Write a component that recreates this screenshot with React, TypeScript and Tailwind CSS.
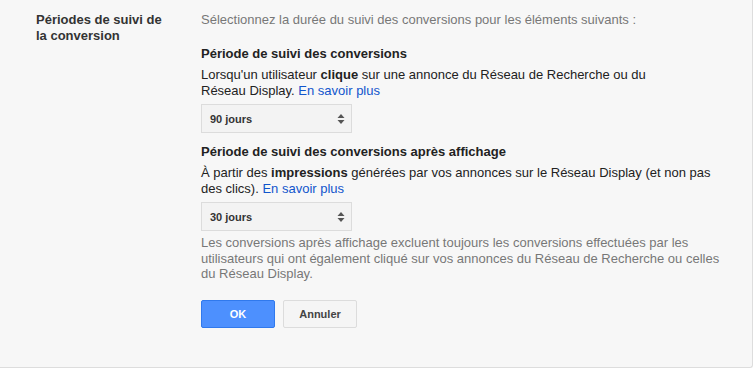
import React from 'react';

const Select = ({ value }: { value: string }) => (
  <div className="flex h-[29px] w-[151px] items-center justify-between border border-[#dcdcdc] bg-[#f3f3f3] pl-[8px] pr-[6px] text-[11px] font-bold text-[#333]">
    <span>{value}</span>
    <svg width="8" height="12" viewBox="0 0 8 12">
      <path d="M4 1 L7.5 5 L0.5 5 Z" fill="#555" />
      <path d="M4 11 L7.5 7 L0.5 7 Z" fill="#555" />
    </svg>
  </div>
);

export default function App() {
  return (
    <div className="h-[369px] w-[755px] bg-white font-['Liberation_Sans',Arial,sans-serif] text-[13px]">
      <div className="flex h-[368px] w-[753px] rounded-br-[3px] border-b border-r border-[#dddddd] bg-[#f7f7f7] pt-[12px]">
        {/* Label */}
        <div className="w-[201px] shrink-0 pl-[36px] pr-[30px] font-bold leading-[16px] text-[#333]">
          Périodes de suivi de la conversion
        </div>

        {/* Content */}
        <div className="flex flex-1 flex-col leading-[16px] text-[#222]">
          <p className="text-[#777]">Sélectionnez la durée du suivi des conversions pour les éléments suivants :</p>

          <h3 className="mt-[18px] font-bold text-[#222]">Période de suivi des conversions</h3>
          <p className="mt-[5px] w-[450px]">
            Lorsqu'un utilisateur <b>clique</b> sur une annonce du Réseau de Recherche ou du Réseau Display.{' '}
            <a className="text-[#1155cc]">En savoir plus</a>
          </p>
          <div className="mt-[5px]">
            <Select value="90 jours" />
          </div>

          <h3 className="mt-[11px] font-bold text-[#222]">Période de suivi des conversions après affichage</h3>
          <p className="mt-[5px] w-[520px]">
            À partir des <b>impressions</b> générées par vos annonces sur le Réseau Display (et non pas des clics).{' '}
            <a className="text-[#1155cc]">En savoir plus</a>
          </p>
          <div className="mt-[5px]">
            <Select value="30 jours" />
          </div>

          <p className="mt-[4px] w-[520px] leading-[15.5px] text-[#777]">
            Les conversions après affichage excluent toujours les conversions effectuées par les utilisateurs qui ont également cliqué sur vos annonces du Réseau de Recherche ou celles du Réseau Display.
          </p>

          <div className="mt-[18px] flex gap-[8px] text-[11px] font-bold">
            <button className="h-[28px] w-[74px] rounded-[2px] border border-[#3079ed] bg-[#4d90fe] text-white">OK</button>
            <button className="h-[28px] w-[74px] rounded-[2px] border border-[#dcdcdc] bg-[#f5f5f5] text-[#444]">Annuler</button>
          </div>
        </div>
      </div>
    </div>
  );
}
